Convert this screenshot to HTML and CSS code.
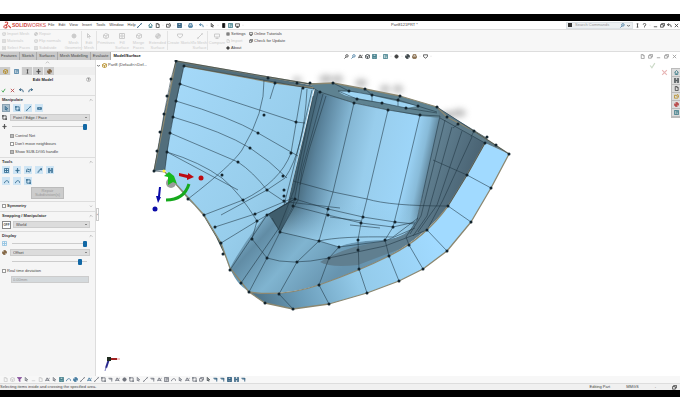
FILE: index.html
```html
<!DOCTYPE html>
<html lang="en">
<head>
<meta charset="utf-8">
<title>SOLIDWORKS - Edit Model</title>
<link rel="stylesheet" href="styles.css">
</head>
<body>
<svg class="sprite" aria-hidden="true">
  <symbol id="home" viewBox="0 0 12 12"><path d="M1 6 6 1l5 5M3 5v6h6V5M6 11V8"/></symbol>
  <symbol id="page" viewBox="0 0 12 12"><path d="M3 1h4l3 3v7H3zM7 1v3h3"/></symbol>
  <symbol id="folder" viewBox="0 0 12 12"><path d="M1 10V3h4l1 2h5l-2 5zM6 3l3-2 2 3"/></symbol>
  <symbol id="save" viewBox="0 0 12 12"><path d="M1 1h10v10H1zM3 1v4h6V1M3 11V8h6v3M2 6h8"/></symbol>
  <symbol id="print" viewBox="0 0 12 12"><path d="M3 5V1h6v4M1 5h10v4H1zM3 8h6v3H3z"/></symbol>
  <symbol id="undo" viewBox="0 0 12 12"><path d="M5 1 1 4l4 3M1 4h6q4 1 3 6"/></symbol>
  <symbol id="redo" viewBox="0 0 12 12"><path d="m7 1 4 3-4 3M11 4H5Q1 5 2 10"/></symbol>
  <symbol id="cursor" viewBox="0 0 12 12"><path d="m3 1 0 8 2-2 2 4M3 1l6 6H5"/></symbol>
  <symbol id="signal" viewBox="0 0 12 12"><path class="solid" d="M4 1h5v10H4z"/></symbol>
  <symbol id="grid" viewBox="0 0 12 12"><path d="M1 1h10v10H1zM1 6h10M6 1v10"/></symbol>
  <symbol id="list" viewBox="0 0 12 12"><path d="M1 1h10v10H1zM5 1v10M6 4h4M6 7h4"/></symbol>
  <symbol id="screen" viewBox="0 0 12 12"><path d="M1 2h10v6H1zM3 11h6M6 8v3"/></symbol>
  <symbol id="gear" viewBox="0 0 12 12"><circle cx="6" cy="6" r="3"/><path d="M6 0v3M6 9v3M0 6h3M9 6h3M2 2l2 2M8 8l2 2M10 2 8 4M4 8l-2 2"/></symbol>
  <symbol id="info" viewBox="0 0 12 12"><circle class="solid" cx="6" cy="6" r="4"/></symbol>
  <symbol id="lens" viewBox="0 0 12 12"><circle cx="7" cy="4.500" r="3"/><path d="m5 7-4 4"/></symbol>
  <symbol id="cube" viewBox="0 0 12 12"><path d="m1 4 4-3 6 2v6l-5 2-5-2zM1 4l5 2 5-3M6 6v5"/></symbol>
  <symbol id="ball" viewBox="0 0 12 12"><circle cx="6" cy="6" r="4.500"/><path class="solid" d="M6 6V1.500A4.500 4.500 0 0 1 10.500 6zM6 6v4.500A4.500 4.500 0 0 1 1.500 6z"/></symbol>
  <symbol id="line" viewBox="0 0 12 12"><path d="M2 10 10 2M1 9v2h2M9 1h2v2"/></symbol>
  <symbol id="arc" viewBox="0 0 12 12"><path d="M1 9q5-9 10-2M1 8v2M11 6v3"/></symbol>
  <symbol id="waves" viewBox="0 0 12 12"><path d="m1 5 3-3 4 3 3-3M1 10l3-3 4 3 3-3M1 5v5M11 2v5"/></symbol>
  <symbol id="curve" viewBox="0 0 12 12"><path d="M1 10h3Q4 3 10 3M9 1h2v4H9z"/></symbol>
  <symbol id="split" viewBox="0 0 12 12"><path d="M1 1h3v10H1zM8 1h3v10H8zM4 6h4"/></symbol>
  <symbol id="plus" viewBox="0 0 12 12"><path d="M1 6h10M6 1v10M4 3l2-2 2 2M4 9l2 2 2-2"/></symbol>
  <symbol id="square" viewBox="0 0 12 12"><path d="M2 2h8v8H2zM1 1h2v2H1zM9 9h2v2H9z"/></symbol>
  <symbol id="rail" viewBox="0 0 12 12"><path d="M1 4h10v4H1zM4 4v4M8 4v4"/></symbol>
  <symbol id="check" viewBox="0 0 12 12"><path d="m2 6 3 4 5-8"/></symbol>
  <symbol id="cross" viewBox="0 0 12 12"><path d="m2 2 8 8M10 2l-8 8"/></symbol>
  <symbol id="min" viewBox="0 0 12 12"><path d="M2 9h8"/></symbol>
  <symbol id="restore" viewBox="0 0 12 12"><path d="M1 4h7v6H1zM4 4V1h7v6H8"/></symbol>
  <symbol id="person" viewBox="0 0 12 12"><path d="M4 2h4M6 2v8M4 10h4"/></symbol>
  <symbol id="help" viewBox="0 0 12 12"><path d="M3 4q0-3 3-3t3 3-3 3v2M6 10v1"/></symbol>
  <symbol id="filter" viewBox="0 0 12 12"><path class="solid" d="M1 1h10L7 6v5L5 9V6z"/></symbol>
  <symbol id="flag" viewBox="0 0 12 12"><path d="M1 3h8v3M9 3v8M5 3v4"/></symbol>
  <symbol id="angle" viewBox="0 0 12 12"><path d="m1 10 4-8 5 8M2 8h8M8 5l3-2"/></symbol>
  <symbol id="heart" viewBox="0 0 12 12"><path d="M1 2h10v4l-5 4-5-4z"/></symbol>
  <symbol id="down" viewBox="0 0 12 12"><path d="m3 5 3 3 3-3"/></symbol>
  <symbol id="up" viewBox="0 0 12 12"><path d="m2 8 4-4 4 4"/></symbol>
</svg>

<div class="app">
  <header class="titlebar">
    <div class="brand"><svg viewBox="0 0 24 20"><path d="M5 3q10-3 7 4-2 4-8 4M4 18q10 0 5-7M14 11l7 7M3 12l-1 5"/></svg><b>SOLID</b><span>WORKS</span></div>
    <nav class="menu"><a href="#">File</a><a href="#">Edit</a><a href="#">View</a><a href="#">Insert</a><a href="#">Tools</a><a href="#">Window</a><a href="#">Help</a></nav>
    <svg class="i pin"><use href="#line"/></svg>
    <div class="icons quick" data-icons="home:teal page down folder down save:navy down print:blue down undo:blue down cursor down signal:black list:teal screen down"></div>
    <div class="doc">Part8121PRT *</div>
    <label class="search"><span class="badge"></span><input type="text" placeholder="Search Commands" aria-label="Search commands"><svg class="i blue"><use href="#lens"/></svg><svg class="i"><use href="#down"/></svg></label>
    <div class="icons window" data-icons="person help down min restore undo cross"></div>
  </header>

  <section class="ribbon">
    <div class="stack faded"><button><svg class="i"><use href="#cube"/></svg>Import Mesh</button><button><svg class="i"><use href="#grid"/></svg>Materials</button><button><svg class="i"><use href="#split"/></svg>Select Faces</button></div>
    <div class="stack faded"><button><svg class="i"><use href="#ball"/></svg>Repair</button><button><svg class="i"><use href="#cube"/></svg>Flip normals</button><button><svg class="i"><use href="#grid"/></svg>Subdivide</button></div>
    <div class="tiles faded">
      <button><svg class="i"><use href="#info"/></svg>Mesh<br>Geometry</button>
      <button class="rule"><svg class="i"><use href="#cursor"/></svg>Edit<br>Mesh</button>
      <button class="rule wide"><svg class="i"><use href="#cube"/></svg>Primitives</button>
      <button class="slender"><svg class="i"><use href="#grid"/></svg>Fill<br>Surface</button>
      <button class="wide"><svg class="i"><use href="#cube"/></svg>Merge<br>Faces</button>
      <button class="wide"><svg class="i"><use href="#ball"/></svg>Extended<br>Surface</button>
      <button class="rule broad"><svg class="i"><use href="#heart"/></svg>Create Sketch</button>
      <button><svg class="i"><use href="#line"/></svg>To Mesh<br>Surface</button>
      <button class="rule wide"><svg class="i"><use href="#screen"/></svg>Compare</button>
    </div>
    <div class="stack"><button><svg class="i"><use href="#gear"/></svg>Settings</button><button class="faded"><svg class="i"><use href="#page"/></svg>Import</button><button><svg class="i"><use href="#info"/></svg>About</button></div>
    <div class="stack"><button><svg class="i"><use href="#screen"/></svg>Online Tutorials</button><button><svg class="i"><use href="#restore"/></svg>Check for Update</button></div>
  </section>

  <div class="tabrow">
    <nav class="tabs"><a href="#">Features</a><a href="#">Sketch</a><a href="#">Surfaces</a><a href="#">Mesh Modelling</a><a href="#">Evaluate</a><a href="#" class="current">Model/Surface</a></nav>
    <div class="icons hud" data-icons="lens lens:blue angle cube:dark save:teal down list:teal down info down ball:dark print:brown down heart down"></div>
    <div class="icons docwin" data-icons="page restore min restore cross"></div>
  </div>

  <main class="work">
    <aside class="panel">
      <div class="grip"><svg class="i"><use href="#up"/></svg></div>
      <div class="ptabs"><button><svg class="i gold"><use href="#cube"/></svg></button><button class="on"><svg class="i blue"><use href="#list"/></svg></button><button><svg class="i"><use href="#person"/></svg></button><button><svg class="i"><use href="#plus"/></svg></button><button><svg class="i brown"><use href="#ball"/></svg></button></div>
      <h1>Edit Model<svg class="i"><use href="#help"/></svg></h1>
      <div class="actions"><button><svg class="i green"><use href="#check"/></svg></button><button><svg class="i red"><use href="#cross"/></svg></button><button><svg class="i navy"><use href="#undo"/></svg></button><button><svg class="i navy"><use href="#redo"/></svg></button></div>

      <section class="group">
        <h2>Manipulate<svg class="i"><use href="#up"/></svg></h2>
        <div class="tools"><button class="on"><svg class="i"><use href="#cursor"/></svg></button><button><svg class="i"><use href="#square"/></svg></button><button><svg class="i"><use href="#line"/></svg></button><button><svg class="i"><use href="#rail"/></svg></button></div>
        <div class="field"><svg class="i"><use href="#square"/></svg><select aria-label="Selection type"><option>Point / Edge / Face</option></select></div>
        <div class="field slide"><svg class="i"><use href="#plus"/></svg><input type="range" value="100" aria-label="Manipulator size"></div>
        <div class="checks"><label><input type="checkbox" checked>Control Net</label><label><input type="checkbox">Don't move neighbours</label><label><input type="checkbox" checked>Show SUB-D/G5 handle</label></div>
      </section>

      <section class="group">
        <h2>Tools<svg class="i"><use href="#up"/></svg></h2>
        <div class="tools"><button><svg class="i"><use href="#grid"/></svg></button><button><svg class="i"><use href="#plus"/></svg></button><button><svg class="i"><use href="#waves"/></svg></button><button><svg class="i"><use href="#curve"/></svg></button><button><svg class="i"><use href="#split"/></svg></button><button><svg class="i"><use href="#arc"/></svg></button><button><svg class="i"><use href="#arc"/></svg></button><button><svg class="i"><use href="#square"/></svg></button></div>
        <button class="big" disabled>Repair<br>Subdivision(s)</button>
      </section>

      <section class="group slim"><h2><label><input type="checkbox">Symmetry</label><svg class="i"><use href="#down"/></svg></h2></section>

      <section class="group">
        <h2>Snapping / Manipulator<svg class="i"><use href="#up"/></svg></h2>
        <div class="field snap"><button class="off">OFF</button><select aria-label="Snapping space"><option>World</option></select></div>
      </section>

      <section class="group display">
        <h2>Display<svg class="i"><use href="#up"/></svg></h2>
        <div class="field slide"><svg class="i sky"><use href="#grid"/></svg><input type="range" value="100" aria-label="Grid opacity"></div>
        <div class="field"><svg class="i brown"><use href="#ball"/></svg><select aria-label="Material"><option>Offset</option></select></div>
        <div class="field slide"><span class="i"></span><input type="range" value="93" aria-label="Opacity"></div>
        <label class="deviation"><input type="checkbox">Real time deviation</label>
        <input class="amount" type="text" value="0.00mm" aria-label="Deviation" disabled>
      </section>
    </aside>

    <section class="view">
      <div class="tree"><svg class="i"><use href="#down"/></svg><svg class="i gold"><use href="#cube"/></svg>Part8 (Default&lt;&lt;Def...</div>
      <svg class="model" viewBox="96 60 575 316" preserveAspectRatio="xMinYMin meet" role="img" aria-label="Surface model">
        <defs>
          <linearGradient id="cyl" gradientUnits="userSpaceOnUse" x1="304" y1="130" x2="436" y2="158"><stop offset="0" stop-color="#3f5d6c"/><stop offset=".12" stop-color="#5a839c"/><stop offset=".3" stop-color="#82b4d1"/><stop offset=".5" stop-color="#98cdec"/><stop offset=".8" stop-color="#9dd5f8"/><stop offset=".9" stop-color="#88bbd9"/><stop offset="1" stop-color="#4d6c7e"/></linearGradient>
          <linearGradient id="sheet" x1="0" y1="0" x2="1" y2="1"><stop offset="0" stop-color="#a6dafa"/><stop offset=".6" stop-color="#97cdeb"/><stop offset="1" stop-color="#82b6d4"/></linearGradient>
          <linearGradient id="bowl" gradientUnits="userSpaceOnUse" x1="255" y1="215" x2="330" y2="282"><stop offset="0" stop-color="#83b6d3"/><stop offset=".2" stop-color="#618ca5"/><stop offset=".55" stop-color="#80b4d0"/><stop offset="1" stop-color="#6794af"/></linearGradient>
          <linearGradient id="rim" gradientUnits="userSpaceOnUse" x1="250" y1="300" x2="430" y2="230"><stop offset="0" stop-color="#4b6e82"/><stop offset=".25" stop-color="#6b9dba"/><stop offset=".55" stop-color="#93cae9"/><stop offset="1" stop-color="#a1daff"/></linearGradient>
          <linearGradient id="wall" gradientUnits="userSpaceOnUse" x1="425" y1="180" x2="470" y2="195"><stop offset="0" stop-color="#607f90"/><stop offset="1" stop-color="#486171"/></linearGradient>
          <linearGradient id="foot" x1="0" y1="0" x2="0" y2="1"><stop offset=".3" stop-color="#8fc5e2" stop-opacity="0"/><stop offset="1" stop-color="#9dd3f1" stop-opacity=".9"/></linearGradient>
          <filter id="soft" x="-50%" y="-50%" width="200%" height="200%"><feGaussianBlur stdDeviation="3"/></filter>
        </defs>
        <g fill="#777" opacity=".5" filter="url(#soft)"><ellipse cx="326" cy="79" rx="7" ry="4"/><ellipse cx="338" cy="79" rx="5" ry="4"/><ellipse cx="361" cy="83" rx="6" ry="4"/><ellipse cx="385" cy="89" rx="5" ry="4"/><ellipse cx="398" cy="89" rx="5" ry="4"/><ellipse cx="448" cy="115" rx="6" ry="4"/><ellipse cx="459" cy="113" rx="7" ry="4"/><ellipse cx="297" cy="80" rx="5" ry="3"/></g>

        <path fill="#526e7c" d="M176 61 268 77 315 86 313 91 184 66 165 170 154 171 164 114Z"/>
        <path fill="url(#sheet)" d="M184 66 275 83 314 88 293 180 288 202 267 215 254 240 249 292 241 283 230 270 221 243 204 215 188 199 165 170 170 133Z"/>
        <path fill="url(#bowl)" d="M293 196 Q283 211 267 214 Q245 240 230 268 Q238 288 253 293 Q282 296 319 285 Q359 271 389 256 Q424 236 448 206L425 190 418 215 360 220Z"/>
        <path fill="url(#wall)" d="M438 108 487 138 485 143 467 175 448 206Q428 232 400 249L358 265Q330 268 320 262Q345 246 385 241 410 235 418 218Z"/>
        <path fill="url(#cyl)" d="M315 88 320 92 354 103 388 110 420 115 440 116 417 220Q410 237 383 240 350 241 339 247L319 241 280 232 268 214 288 202 293 180Z"/>
        <path fill="url(#foot)" d="M300 183 333 192 367 199 421 205 417 220Q410 237 383 240 350 241 339 247L319 241 280 232 295 199Z"/>
        <path fill="url(#rim)" d="M485 143 509 154 491 188 471 222 447 251 423 269 399 281 367 293 329 304 293 309 265 303 249 292Q284 297 319 285 359 271 389 256 424 238 448 206L467 175Z"/>
        <path fill="#5e8291" d="M313 88 310 83 333 83 365 89 400 96 437 107 442 114 440 118 420 116 388 110 354 103 320 93Z"/>
        <path fill="#9ed5f4" d="M338 91Q360 91 378 97L418 106 406 108 382 103 357 98Q342 96 338 91"/>
        <path fill="#5e7b89" d="M437 107 509 154 485 143 440 118Z"/>
        <path fill="#3d5254" d="M165 172 188 199 204 215 221 243 226 258 216 237 203 215 186 196Z"/>
        <g class="edge"><path d="M176 61 268 77 310 84 333 83 365 89 400 96 437 107 447 117 474 131 509 154 491 188 471 222 447 251 423 269 399 281 367 293 329 304 293 309 265 303 249 292 230 268 221 243 204 215 165 172M176 61 154 171M184 66 275 83 314 88M485 143 467 175 448 206Q425 238 389 256 359 271 319 285 284 297 249 292"/></g>
        <g class="wire">
          <path d="M176 61 171 79 164 114 154 171 165 172M184 66 176 101 167 152 165 170M176 61 310 84M184 66 314 89"/>
          <path d="M180 84 296 122 305 123M176 101Q230 117 258 133 L298 156M173 117Q224 132 250 148 269 160 287 178M170 133 238 162Q253 172 267 190L288 204M167 152Q200 162 222 178 240 193 257 221L252 239M167 152 238 190"/>
          <path d="M264 80Q265 112 242 150 232 165 188 199M302 88 291 153Q280 182 243 200L204 215M307 89Q304 150 285 178L267 190 221 215M312 90Q303 130 290 182L284 205M275 83 270 99"/>
          <path d="M215 227 255 214 293 198M221 243 257 221 295 199M230 270 267 215 293 200M249 292 267 258 280 232 293 206Q302 160 318 92M241 283 279 228 294 190 313 96M323 94 302 170 298 200 280 232M326 96 309 150 300 185"/>
          <path d="M354 103 333 192 328 209 319 241 297 262 279 294 293 309M388 110 367 199 361 223 358 240 359 269 367 293M420 115 400 199 393 227 385 240 389 256 399 281"/>
          <path d="M293 181 333 192 367 199Q390 206 448 206M295 199 328 209 363 217 395 222 415 224M293 206 328 215 361 223 393 227 415 222M272 218 280 232 319 241 339 247 385 241 415 228M252 239 267 258Q290 266 329 258L385 246 427 230M319 241Q340 236 393 237L418 218M339 247 329 258 319 285 329 304M288 202 340 208M330 217 361 221M350 225 380 228"/>
          <path d="M467 175 491 188M448 206 471 222M427 230 447 251M409 245 423 269M440 116 417 220 406 237 409 245M445 120 421 216 410 234M452 127 427 216 413 236M462 131 437 205 418 232M472 137 443 200 427 230M433 160 467 175M440 118 485 143M437 107 509 154M485 143 467 175 448 206M458 124 453 128M474 131 471 137"/>
          <path d="M313 88 320 92 354 103 388 110 420 115 440 116M333 83 349 91M365 89 372 95V101M400 96 398 100V106M338 91 349 91 372 95 398 100 437 112M338 91 357 99 382 103 406 108 437 113"/>
        </g>
        <path class="dots" d="M176 61h0M171 79h0M167 96h0M164 114h0M160 132h0M157 151h0M154 171h0M184 66h0M180 84h0M176 101h0M173 117h0M170 133h0M167 152h0M268 78h0M275 83h0M297 83h0M303 88h0M310 83h0M333 83h0M365 89h0M400 96h0M437 107h0M447 117h0M458 124h0M474 131h0M487 137h0M496 145h0M509 154h0M485 143h0M491 188h0M471 222h0M447 251h0M423 269h0M399 281h0M367 293h0M329 304h0M293 309h0M265 303h0M249 292h0M241 283h0M230 270h0M223 254h0M221 243h0M215 227h0M204 215h0M188 199h0M467 175h0M448 206h0M427 230h0M409 245h0M389 256h0M359 269h0M319 285h0M279 294h0M264 115h0M296 122h0M258 133h0M291 153h0M250 148h0M283 176h0M238 162h0M267 190h0M222 175h0M243 200h0M255 214h0M257 221h0M252 239h0M284 190h0M284 196h0M284 201h0M267 215h0M295 199h0M293 206h0M280 232h0M267 258h0M297 262h0M329 258h0M319 241h0M339 247h0M328 209h0M328 215h0M363 217h0M361 223h0M395 222h0M393 227h0M358 240h0M358 250h0M385 240h0M320 92h0M354 103h0M388 110h0M420 115h0M357 99h0M382 103h0M406 108h0M372 95h0M398 100h0M349 91h0M418 106h0"/>
        <circle cx="171" cy="183" r="5" fill="#9a9d9b"/><path fill="#16b91d" d="m164 176 5-4 5 4 3 8-4-2-5 3v-8Z"/><circle cx="164" cy="171" r="1.500" fill="#ffef3a"/>
        <path fill="none" stroke="#16a91d" stroke-width="3" d="M166 200Q184 200 189 184"/>
        <path fill="#bd0b12" d="m179 173 9 2 0-2 6 4-7 3 0-2-8-2Z"/><circle cx="201" cy="178" r="2.500" fill="#bd0b12"/>
        <path fill="#0b0ba8" d="m159 187 2 0-1 10 1 0-3 6-2-7 2 0Z"/><circle cx="155" cy="209" r="2.500" fill="#0b0ba8"/>
        <path fill="none" stroke="#26268c" stroke-width="2" d="m109 359-3 9"/><path fill="none" stroke="#a02020" stroke-width="2" d="M110 359h7"/><path fill="#202c20" d="M107 357h4v4h-4z"/><path fill="none" stroke="#8080c0" d="m106 367-1 4"/><path stroke="#e88" d="M117 359h3"/>
      </svg>
      <div class="confirm"><svg class="i ok"><use href="#check"/></svg><svg class="i no"><use href="#cross"/></svg></div>
      <button class="collapse" aria-label="Collapse panel">‹</button>
    </section>

    <nav class="taskpane"><button><svg class="i teal"><use href="#home"/></svg></button><button><svg class="i dark"><use href="#split"/></svg></button><button><svg class="i"><use href="#page"/></svg></button><button><svg class="i gold"><use href="#folder"/></svg></button><button><svg class="i red"><use href="#ball"/></svg></button><button><svg class="i teal"><use href="#list"/></svg></button></nav>
  </main>

  <div class="icons bottom" data-icons="page:pale cube:pale filter:purple cursor min:pale page:pale angle cursor save:teal arc:blue ball:blue line angle:blue line square flag angle info square cursor line flag angle list arc cursor angle square restore cursor:dark flag:navy flag:navy save:navy split:navy flag:navy"></div>
  <footer class="status"><span class="hint">Selecting items inside and crossing the specified area.</span><span>Editing Part</span><span>MMGS</span><span>-</span><svg class="i"><use href="#restore"/></svg></footer>
</div>
<script src="app.js"></script>
</body>
</html>
```
FILE: styles.css
```css
* { box-sizing: border-box; }
body { margin: 0; background: #fff; color: #444; font: 4px/6px "Liberation Sans", Arial, sans-serif; }
button, input, select { font: inherit; color: inherit; margin: 0; padding: 0; border: 0; background: none; border-radius: 0; }
a { color: inherit; text-decoration: none; }
h1, h2 { margin: 0; font-size: 4px; line-height: 6px; }
.sprite { position: absolute; width: 0; height: 0; }
.i { width: 5px; height: 5px; flex: none; display: block; fill: none; stroke: currentColor; stroke-width: 2; }
.solid { fill: currentColor; }
.blue { color: #447ba0; } .navy { color: #235477; } .teal { color: #397886; } .dark { color: #3c4548; } .black { color: #111; }
.gold { color: #b58b24; } .brown { color: #806340; } .green { color: #35a043; } .red { color: #b84848; }
.purple { color: #86509b; } .pale { color: #ccc; } .sky { color: #8cbfe0; }

.app { display: flex; flex-direction: column; min-height: calc(100vh - 28px); margin: 14px 0; border-top: 7px solid #000; border-bottom: 7px solid #000; }
.icons { display: flex; align-items: center; gap: 2px; }
.tiny .i { width: 2px; height: 4px; opacity: .6; }

.titlebar { display: flex; align-items: center; height: 8px; }
.brand { display: flex; align-items: center; width: 48px; padding-left: 3px; color: #cf4640; font-size: 5px; }
.brand svg { width: 9px; height: 8px; fill: none; stroke: currentColor; stroke-width: 3; }
.menu { display: flex; gap: 4px; width: 89px; }
.pin { color: #235477; }
.quick { width: 97px; padding-left: 6px; }
.doc { flex: 1; padding-left: 152px; white-space: nowrap; }
.search { display: flex; align-items: center; width: 67px; height: 7px; padding: 0 1px; border: 1px solid #dde2e6; background: #edf0f2; }
.search input { flex: 1; min-width: 0; height: 5px; padding-left: 2px; }
.search input::placeholder { color: #999; }
.badge { width: 4px; height: 4px; background: #333; }
.window { padding: 0 1px; margin-left: 1px; }

.ribbon { display: flex; height: 23px; padding: 1px 2px; background: #f7f7f7; border-top: 1px solid #ddd; border-bottom: 1px solid #ddd; }
.stack { display: flex; flex-direction: column; gap: 1px; width: 31px; margin-right: 1px; white-space: nowrap; }
.stack button { display: flex; align-items: center; gap: 1px; height: 6px; }
.stack .i { width: 4px; height: 4px; }
.tiles + .stack { width: 22px; }
.faded { color: #ccc; }
.tiles { display: flex; }
.tiles button { display: flex; flex-direction: column; align-items: center; justify-content: flex-start; gap: 1px; width: 15px; padding-top: 2px; line-height: 5px; white-space: nowrap; }
.tiles .i { width: 6px; height: 6px; }
.tiles .rule { border-left: 1px solid #e3e3e3; }
.tiles .slender { width: 14px; }
.tiles .wide { width: 19px; }
.tiles .broad { width: 25px; }

.tabrow { display: flex; align-items: center; height: 8px; }
.tabs { display: flex; width: 344px; }
.tabs a { height: 8px; padding: 1px 2px; line-height: 6px; background: #c9c9c9; border-right: 1px solid #aaa; white-space: nowrap; }
.tabs a:first-child { padding-left: 1px; }
.tabs .current { background: #fff; color: #111; font-weight: bold; border: 0; }
.docwin { gap: 3px; margin-left: auto; padding-right: 3px; color: #999; }

.work { display: flex; flex: 1; }
.panel { width: 96px; flex: none; background: #f5f5f5; border-right: 1px solid #ddd; }
.grip { display: flex; justify-content: center; height: 7px; color: #bbb; }
.ptabs { display: flex; background: #eee; }
.ptabs button { display: grid; place-items: center; width: 11px; height: 8px; background: #ccc; border-right: 1px solid #eee; }
.ptabs .on { background: #f5f5f5; }
.panel h1 { display: flex; justify-content: flex-end; gap: 33px; height: 10px; padding: 2px 4px 0 0; color: #222; }
.panel h1 .i { border: 1px solid #bbb; border-radius: 50%; }
.actions { display: flex; align-items: center; gap: 4px; height: 10px; padding-left: 1px; }
.group { padding: 1px 5px 1px 2px; border-top: 1px solid #ddd; }
.group h2 { display: flex; justify-content: space-between; align-items: center; height: 6px; color: #333; }
.group h2 .i { color: #999; width: 4px; height: 4px; margin-right: -3px; }
.tools { display: flex; flex-wrap: wrap; gap: 3px; padding: 1px 30px 1px 0; }
.tools button { display: grid; place-items: center; width: 8px; height: 8px; background: #cfe5f4; color: #2e668c; }
.tools .on { background: #a9bfcd; outline: 1px solid #8ba2b2; outline-offset: -1px; }
.field { display: flex; align-items: center; gap: 3px; height: 9px; }
.field select { appearance: none; flex: 1; min-width: 0; height: 7px; padding: 0 2px; border: 1px solid #ccc; background: #dcdcdc linear-gradient(#888, #888) no-repeat right 2px center / 2px 1px; line-height: 5px; }
.slide input { appearance: none; flex: 1; min-width: 0; height: 6px; margin: 0 3px 0 2px; background: linear-gradient(#ccc, #ccc) no-repeat center / 100% 1px; }
.slide input::-webkit-slider-thumb { appearance: none; width: 4px; height: 6px; background: #1268a5; border-radius: 1px; }
input[type="checkbox"] { appearance: none; width: 4px; height: 4px; border: 1px solid #999; background: #fff; flex: none; }
input[type="checkbox"]:checked { background: #bbb; }
label { display: flex; align-items: center; gap: 1px; }
.checks { padding: 1px 0 0 8px; }
.checks label { height: 8px; }
.big { display: block; width: 33px; height: 12px; margin: 1px 0 1px 29px; border: 1px solid #bbb; background: #ccc; color: #999; line-height: 4px; }
.slim { padding-top: 1px; padding-bottom: 2px; }
.off { width: 9px; height: 8px; border: 1px solid #888; background: #fff; font-size: 3px; font-weight: bold; line-height: 6px; }
.snap { gap: 2px; height: 11px; }
.display .field { height: 9px; }
.deviation { height: 9px; }
.amount { display: block; width: 78px; height: 7px; margin: 1px 0 0 9px; padding: 0 1px; border: 1px solid #ccc; background: #d5dadd; color: #999; }

.view { position: relative; flex: 1; min-width: 0; overflow: hidden; }
.model { display: block; width: 100%; height: 100%; }
.tree { position: absolute; top: 2px; left: 0; display: flex; align-items: center; gap: 1px; white-space: nowrap; }
.confirm { position: absolute; top: 2px; right: 2px; width: 20px; }
.confirm .i { width: 7px; height: 7px; }
.ok { color: #ccdac8; }
.no { color: #e8b6b6; margin-left: 12px; }
.collapse { position: absolute; top: 148px; left: 0; width: 3px; height: 13px; border: 1px solid #ccc; background: #fff; line-height: 10px; }
.edge { fill: none; stroke: #8b8770; stroke-width: 1.3; stroke-linejoin: round; }
.wire { fill: none; stroke: #203642; stroke-width: .7; stroke-opacity: .8; }
.dots { fill: none; stroke: #14252e; stroke-width: 3; stroke-linecap: round; }
.taskpane { width: 9px; margin-top: 8px; align-self: flex-start; background: #ddd; border: 1px solid #bbb; border-right: 0; }
.taskpane button { display: grid; place-items: center; width: 8px; height: 8px; border-bottom: 1px solid #bbb; }

.bottom { width: 100%; height: 8px; padding-left: 3px; background: #f7f7f7; border-bottom: 1px solid #ddd; color: #71757e; }
.bottom button { width: 5px; }
.status { display: flex; align-items: center; gap: 16px; height: 6px; padding-right: 3px; background: #f0f0f0; line-height: 6px; white-space: nowrap; overflow: hidden; }
.status .hint { flex: 1; }
```
FILE: app.js
```js
// Fills each toolbar from its list of "symbol" or "symbol:colour" names.
const SVG = "http://www.w3.org/2000/svg";
for (const bar of document.querySelectorAll("[data-icons]")) {
  for (const item of bar.dataset.icons.split(" ")) {
    const [name, tone] = item.split(":");
    const button = document.createElement("button");
    button.setAttribute("aria-label", name);
    const svg = document.createElementNS(SVG, "svg");
    svg.setAttribute("class", tone ? "i " + tone : "i");
    const use = document.createElementNS(SVG, "use");
    use.setAttribute("href", "#" + name);
    svg.append(use);
    button.append(svg);
    button.className = name === "down" ? "tiny" : "";
    bar.append(button);
  }
}
```
